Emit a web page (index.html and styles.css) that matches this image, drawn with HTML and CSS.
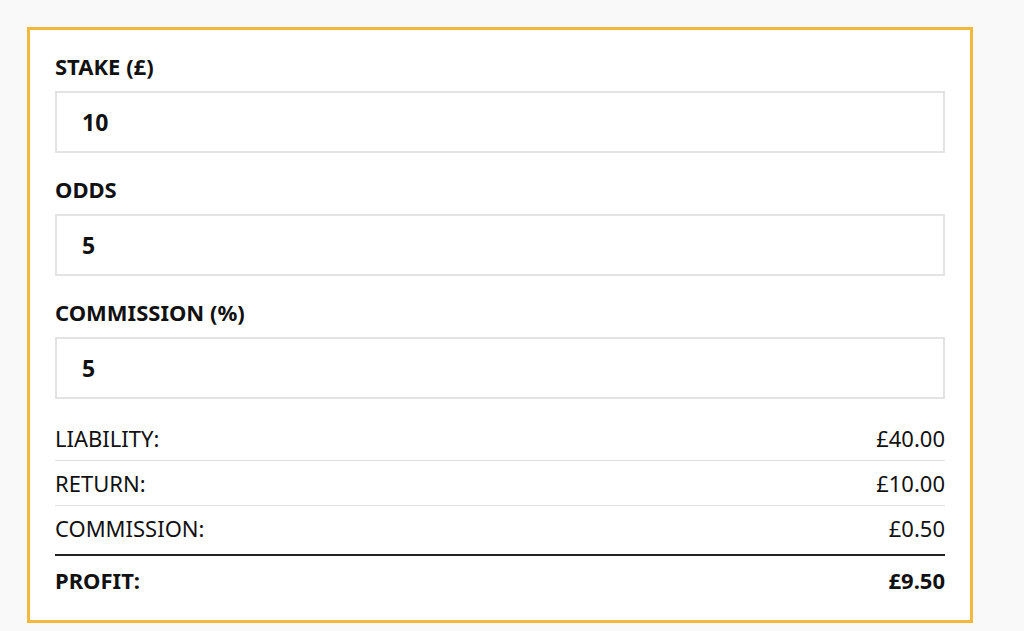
FILE: index.html
```html
<!DOCTYPE html>
<html lang="en">
<head>
    <meta charset="UTF-8">
    <meta name="viewport" content="width=device-width, initial-scale=1.0">
    <title>Lay Bet Calculator</title>
    <link rel="stylesheet" href="styles.css">
</head>
<body>
    <div class="calculator">
        <form id="lay-form">
            <div class="input-group">
                <label for="stake">STAKE (£)</label>
                <input type="text" id="stake" value="10">
            </div>
            <div class="input-group">
                <label for="odds">ODDS</label>
                <input type="text" id="odds" value="5">
            </div>
            <div class="input-group">
                <label for="commission">COMMISSION (%)</label>
                <input type="text" id="commission" value="5">
            </div>
        </form>

        <div class="results">
            <div class="row">
                <span>LIABILITY:</span>
                <span>£40.00</span>
            </div>
            <div class="row">
                <span>RETURN:</span>
                <span>£10.00</span>
            </div>
            <div class="row last">
                <span>COMMISSION:</span>
                <span>£0.50</span>
            </div>
            <div class="row total">
                <span>PROFIT:</span>
                <span>£9.50</span>
            </div>
        </div>
    </div>
</body>
</html>
```

FILE: styles.css
```css
* {
    margin: 0;
    padding: 0;
    box-sizing: border-box;
}

body {
    font-family: "Noto Sans", "Open Sans", Arial, sans-serif;
    background-color: #f9f9f9;
    color: #111;
    padding: 27px;
}

.calculator {
    width: 946px;
    background-color: white;
    border: 3px solid #f5b83f;
    padding: 21px 25px 21px 25px;
}

.input-group {
    margin-bottom: 21px;
}

.input-group label {
    display: block;
    font-size: 22px;
    font-weight: bold;
    line-height: 30px;
    margin-bottom: 10px;
}

.input-group input {
    display: block;
    width: 100%;
    height: 62px;
    padding: 0 25px;
    border: 2px solid #e3e3e3;
    font-family: inherit;
    font-size: 23px;
    font-weight: bold;
    color: #111;
    background-color: white;
    outline: none;
}

.results {
    margin-top: -4px;
}

.row {
    display: flex;
    justify-content: space-between;
    font-size: 22px;
    line-height: 24px;
    padding: 10px 0 10px;
    border-bottom: 1px solid #e0e0e0;
}

.row.last {
    padding-bottom: 14px;
    border-bottom: 2px solid #222;
}

.row.total {
    border-bottom: none;
    font-weight: bold;
    padding-top: 12px;
    padding-bottom: 7px;
}
```
